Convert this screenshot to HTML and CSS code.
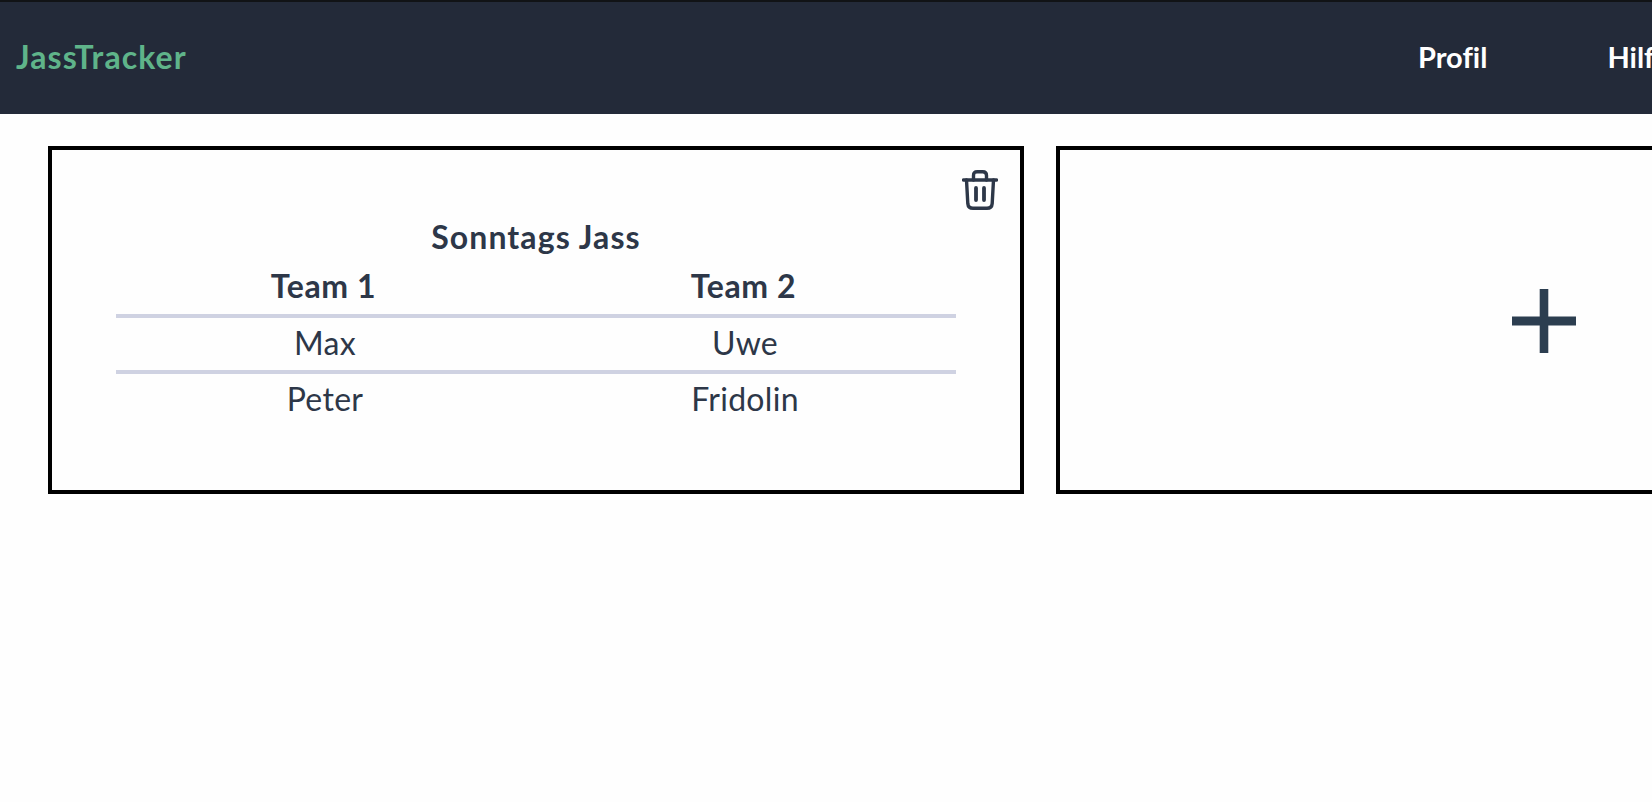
FILE: index.html
```html
<!DOCTYPE html>
<html lang="de">
<head>
<meta charset="utf-8">
<title>JassTracker</title>
<link rel="stylesheet" href="styles.css">
</head>
<body>
<div class="page">
  <header class="topbar">
    <a class="brand">JassTracker</a>
    <nav class="links">
      <a class="link">Profil</a>
      <a class="link">Hilfe</a>
    </nav>
  </header>
  <main class="cards">
    <section class="card">
      <button class="trash" aria-label="Löschen">
        <svg class="trash-icon" viewBox="0 0 36 40" fill="none" stroke="currentColor" stroke-width="3.4" stroke-linecap="round" stroke-linejoin="round">
          <path d="M1.5 10H34.5"/>
          <path d="M4.5 10L5.8 33.5Q6.2 38.3 11 38.3H25Q29.8 38.3 30.2 33.5L31.5 10"/>
          <path d="M11.5 10V5.5Q11.5 1.7 15.3 1.7H20.7Q24.5 1.7 24.5 5.5V10"/>
          <path d="M14 18V30M22 18V30" stroke-width="3.8"/>
        </svg>
      </button>
      <h2 class="title">Sonntags Jass</h2>
      <table class="teams">
        <colgroup><col class="col-a"><col class="col-b"></colgroup>
        <thead>
          <tr><th>Team 1</th><th>Team 2</th></tr>
        </thead>
        <tbody>
          <tr><td>Max</td><td>Uwe</td></tr>
          <tr><td>Peter</td><td>Fridolin</td></tr>
        </tbody>
      </table>
    </section>
    <section class="card card-add">
      <svg class="plus" viewBox="0 0 64 64" aria-label="Neu"><path d="M27.7 0H36.3V27.6H64V36.4H36.3V64H27.7V36.4H0V27.6H27.7Z"/></svg>
    </section>
  </main>
</div>
</body>
</html>
```
FILE: styles.css
```css
html, body {
  margin: 0;
  padding: 0;
  background: #fefefe;
  overflow: hidden;
}
.page {
  width: 2080px;
  font-family: "Lato", "Noto Sans", sans-serif;
  font-variant-ligatures: none;
  color: #2d3748;
}
.topbar {
  box-sizing: border-box;
  height: 114px;
  border-top: 2px solid #111316;
  background: #232a39;
  display: flex;
  align-items: center;
  padding: 0 0 4px 16px;
  font-weight: 700;
}
.brand {
  flex: 0 0 1402px;
  font-size: 32px;
  letter-spacing: 1.1px;
  color: #5fb48a;
}
.links {
  display: flex;
  gap: 120px;
  font-size: 29px;
}
.link {
  color: #fff;
}
.cards {
  display: grid;
  grid-template-columns: repeat(2, 976px);
  gap: 32px;
  padding: 32px 48px;
}
.card {
  position: relative;
  box-sizing: border-box;
  height: 348px;
  border: 4px solid #000;
  padding: 69px 64px 0;
}
.trash {
  position: absolute;
  top: 20px;
  right: 22px;
  padding: 0;
  border: 0;
  background: none;
  color: #2d3748;
  line-height: 0;
}
.trash-icon {
  width: 36px;
  height: 40px;
}
.title {
  margin: 0 0 9px;
  font-size: 32px;
  line-height: 36px;
  letter-spacing: 1.1px;
  font-weight: 700;
  text-align: center;
}
.teams {
  width: 840px;
  border-collapse: collapse;
  table-layout: fixed;
  font-size: 32px;
  line-height: 36px;
  letter-spacing: 0.3px;
  text-align: center;
}
.col-a {
  width: 418px;
}
.col-b {
  width: 422px;
}
.teams td {
  padding: 7px 0 9px;
  font-weight: 400;
}
.teams th {
  font-weight: 700;
  padding: 4px 3px 10px 0;
  letter-spacing: 0.6px;
}
.teams tr {
  border-bottom: 4px solid #cfd2e2;
}
.teams tbody tr:last-child {
  border-bottom: 0;
}
.card-add {
  display: flex;
  align-items: center;
  justify-content: center;
  padding: 2px 0 0;
}
.plus {
  width: 64px;
  height: 64px;
  fill: #2c3e50;
}
```
